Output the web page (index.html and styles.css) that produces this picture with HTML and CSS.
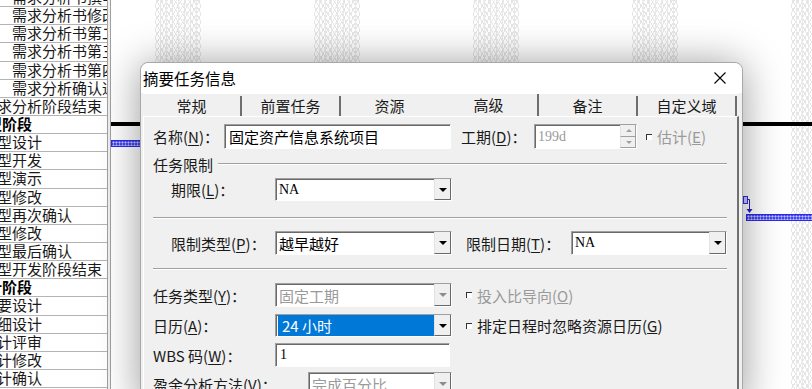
FILE: index.html
```html
<!DOCTYPE html>
<html lang="zh-CN">
<head>
    <meta charset="UTF-8">
    <meta name="viewport" content="width=device-width, initial-scale=1.0">
    <title>摘要任务信息</title>
    <link rel="stylesheet" href="styles.css">
</head>
<body>
    <!-- 背景：任务列表 + 甘特图 -->
    <div class="project">
        <div class="task-list">
            <div class="task lvl2">需求分析书撰写</div>
            <div class="task lvl2">需求分析书修改</div>
            <div class="task lvl2">需求分析书第二次修改</div>
            <div class="task lvl2">需求分析书第三次修改</div>
            <div class="task lvl2">需求分析书第四次修改</div>
            <div class="task lvl2">需求分析确认通过</div>
            <div class="task lvl1">需求分析阶段结束</div>
            <div class="task lvl0">原型阶段</div>
            <div class="task lvl1">原型设计</div>
            <div class="task lvl1">原型开发</div>
            <div class="task lvl1">原型演示</div>
            <div class="task lvl1">原型修改</div>
            <div class="task lvl1">原型再次确认</div>
            <div class="task lvl1">原型修改</div>
            <div class="task lvl1">原型最后确认</div>
            <div class="task lvl1">原型开发阶段结束</div>
            <div class="task lvl0">设计阶段</div>
            <div class="task lvl1">概要设计</div>
            <div class="task lvl1">详细设计</div>
            <div class="task lvl1">设计评审</div>
            <div class="task lvl1">设计修改</div>
            <div class="task lvl1">设计确认</div>
        </div>
        <div class="splitter"></div>
        <div class="gantt">
            <div class="timescale">
                <div class="days first"></div>
                <div class="weekend"></div><div class="days"></div>
                <div class="weekend"></div><div class="days"></div>
                <div class="weekend"></div><div class="days"></div>
                <div class="weekend"></div><div class="days"></div>
                <div class="weekend"></div><div class="days"></div>
            </div>
            <div class="bar summary-bar"></div>
            <div class="bar task-bar bar-a"></div>
            <div class="bar task-bar bar-b"></div>
            <svg class="link" width="14" height="22" viewBox="0 0 14 22">
                <rect x="2.5" y="2.5" width="4" height="7" fill="#c8c8ff" stroke="#3030e0" stroke-width="1"/>
                <path d="M6.5 5.5 H8.5 V17" fill="none" stroke="#2020d0" stroke-width="1"/>
                <path d="M5.5 15 L11.5 15 L8.5 19 Z" fill="#2020d0"/>
            </svg>
        </div>
    </div>

    <!-- 对话框 -->
    <div class="dialog">
        <div class="dialog-title">
            <span>摘要任务信息</span>
            <svg class="close" width="14" height="14" viewBox="0 0 14 14">
                <path d="M1.5 1.5 L12.5 12.5 M12.5 1.5 L1.5 12.5" stroke="#000" stroke-width="1.1"/>
            </svg>
        </div>

        <div class="tabs">
            <div class="tab">常规</div>
            <div class="tab">前置任务</div>
            <div class="tab before-active">资源</div>
            <div class="tab active">高级</div>
            <div class="tab">备注</div>
            <div class="tab">自定义域</div>
        </div>

        <div class="tab-page">
            <div class="row row-name">
                <span class="lbl lbl-name">名称(<u>N</u>)：</span>
                <div class="field edit name-input">固定资产信息系统项目</div>
                <span class="lbl lbl-duration">工期(<u>D</u>)：</span>
                <div class="field spin">
                    <span class="val serif muted">199d</span>
                    <span class="spin-btns"><span class="up"></span><span class="down"></span></span>
                </div>
                <span class="check muted"><i></i>估计(<u>E</u>)</span>
            </div>

            <div class="group-title"><span>任务限制</span><div class="line"></div></div>

            <div class="row row-deadline indent">
                <span class="lbl lbl-indent">期限(<u>L</u>)：</span>
                <div class="field combo"><span class="val serif">NA</span><span class="drop"></span></div>
            </div>

            <div class="sep sep-1"></div>

            <div class="row row-constraint indent">
                <span class="lbl lbl-indent">限制类型(<u>P</u>)：</span>
                <div class="field combo"><span class="val">越早越好</span><span class="drop"></span></div>
                <span class="lbl lbl-date">限制日期(<u>T</u>)：</span>
                <div class="field combo combo-date"><span class="val serif">NA</span><span class="drop"></span></div>
            </div>

            <div class="sep sep-2"></div>

            <div class="row row-type">
                <span class="lbl lbl-wide">任务类型(<u>Y</u>)：</span>
                <div class="field combo"><span class="val muted">固定工期</span><span class="drop muted-drop"></span></div>
                <span class="check muted"><i></i>投入比导向(<u>O</u>)</span>
            </div>

            <div class="row row-calendar">
                <span class="lbl lbl-wide">日历(<u>A</u>)：</span>
                <div class="field combo"><span class="val selected">24 小时</span><span class="drop"></span></div>
                <span class="check"><i></i>排定日程时忽略资源日历(<u>G</u>)</span>
            </div>

            <div class="row row-wbs">
                <span class="lbl lbl-wide">WBS 码(<u>W</u>)：</span>
                <div class="field edit wbs-input"><span class="serif">1</span></div>
            </div>

            <div class="row row-earned">
                <span class="lbl lbl-earned">盈余分析方法(<u>V</u>)：</span>
                <div class="field combo combo-earned"><span class="val muted">完成百分比</span><span class="drop muted-drop"></span></div>
            </div>
        </div>
    </div>
</body>
</html>
```

FILE: styles.css
```css
html, body {
    margin: 0;
    padding: 0;
    height: 389px;
    overflow: hidden;
    background: #fff;
    font-family: "Noto Sans CJK SC", sans-serif;
    color: #000;
}

/* 背景视图 */
.project {
    display: flex;
    height: 389px;
    overflow: hidden;
}

.task-list {
    width: 107px;
    flex-shrink: 0;
    border-right: 1px solid #a0a0a0;
    overflow: hidden;
}

.task {
    height: 18.15px;
    box-sizing: border-box;
    border-bottom: 1px solid #b4b4b4;
    font-size: 15px;
    line-height: 16px;
    white-space: nowrap;
    overflow: hidden;
    color: #1a1a1a;
}

.task:first-child {
    margin-top: -11px;
}

.lvl0 {
    text-indent: -28px;
    font-weight: bold;
    color: #000;
}

.lvl1 {
    text-indent: -18px;
}

.lvl2 {
    text-indent: 12px;
}

.splitter {
    width: 2px;
    flex-shrink: 0;
    background: #f0f0f0;
    border-right: 1px solid #a0a0a0;
}

.gantt {
    position: relative;
    flex: 1;
    overflow: hidden;
}

.timescale {
    display: flex;
    height: 100%;
}

.days {
    width: 113px;
    flex-shrink: 0;
}

.days.first {
    width: 44px;
}

/* 非工作日阴影 */
.weekend {
    width: 46px;
    flex-shrink: 0;
    background-color: #fff;
    background-image:
        repeating-linear-gradient(90deg, transparent 0 5px, #e8e8e8 5px 6px),
        repeating-linear-gradient(60deg, transparent 0 3px, #e6e6e6 3px 4px),
        repeating-linear-gradient(-60deg, transparent 0 3px, #e6e6e6 3px 4px);
}

.bar {
    position: absolute;
}

.summary-bar {
    top: 122px;
    left: 0;
    right: 0;
    height: 4px;
    background: #000;
}

.task-bar {
    height: 5px;
    border: 1px solid #2a2ae8;
    background-color: #4646f0;
    background-image: radial-gradient(#c8c8ff 0.9px, transparent 1.1px);
    background-size: 3px 3px;
}

.bar-a {
    top: 140px;
    left: 0;
    width: 80px;
}

.bar-b {
    top: 214px;
    left: 635px;
    width: 100px;
}

.link {
    position: absolute;
    left: 630px;
    top: 194px;
}

/* 对话框 */
.dialog {
    position: absolute;
    left: 140px;
    top: 62px;
    width: 603px;
    height: 345px;
    box-sizing: border-box;
    border: 1px solid #a8a8a8;
    border-radius: 8px 8px 0 0;
    background: #f0f0f0;
    box-shadow: 0 2px 40px rgba(0, 0, 0, 0.4);
    padding: 0 3px 0 2px;
    font-size: 15px;
}

.dialog-title {
    display: flex;
    align-items: center;
    justify-content: space-between;
    height: 30px;
    margin: 0 -3px 0 -2px;
    padding: 0 15px 0 2px;
    background: #fff;
    border-radius: 8px 8px 0 0;
    font-size: 15.5px;
}

.close {
    display: block;
}

.tabs {
    display: grid;
    grid-template-columns: repeat(6, 99px);
    height: 22px;
    border-top: 1px solid #fff;
}

.tab {
    display: flex;
    align-items: center;
    justify-content: center;
    box-sizing: border-box;
    border-right: 2px solid #6e6e6e;
    height: 20px;
    margin-top: 2px;
    line-height: 20px;
    color: #1a1a1a;
}

.tab.before-active {
    border-right-color: transparent;
}

.tab.active {
    margin-top: 0;
    height: 22px;
}

.tab-page {
    display: flex;
    flex-direction: column;
    height: 300px;
    box-sizing: border-box;
    border-left: 1px solid #fff;
    border-top: 1px solid #fff;
    border-right: 2px solid #707070;
    padding: 7px 10px 0 9px;
}

.row {
    display: flex;
    align-items: center;
}

.lbl {
    flex-shrink: 0;
    white-space: nowrap;
    color: #1a1a1a;
}

.lbl u {
    text-underline-offset: 2px;
}

.lbl-name {
    width: 71px;
}

.lbl-duration {
    width: 73px;
    margin-left: 10px;
}

.lbl-indent {
    width: 104px;
    margin-left: 18px;
}

.lbl-date {
    width: 105px;
    margin-left: 14px;
}

.lbl-wide {
    width: 122px;
}

.lbl-earned {
    width: 155px;
}

/* 输入框与下拉框 */
.field {
    display: flex;
    align-items: center;
    box-sizing: border-box;
    background: #fff;
    border-top: 1px solid #a0a0a0;
    border-left: 1px solid #a0a0a0;
    border-right: 1px solid #fff;
    border-bottom: 1px solid #fff;
    box-shadow: inset 1px 1px 0 #696969;
    white-space: nowrap;
}

.edit {
    padding-left: 4px;
}

.name-input {
    width: 227px;
    height: 25px;
}

.wbs-input {
    width: 175px;
    height: 24px;
}

.spin {
    width: 103px;
    height: 25px;
    padding-left: 3px;
}

.spin .val {
    flex: 1;
}

.spin-btns {
    display: flex;
    flex-direction: column;
    width: 16px;
    height: 23px;
    align-self: flex-start;
}

.spin-btns span {
    position: relative;
    flex: 1;
    background: #f0f0f0;
    border-left: 1px solid #e3e3e3;
    border-right: 1px solid #a0a0a0;
    border-bottom: 1px solid #a0a0a0;
}

.spin-btns .up::after,
.spin-btns .down::after {
    content: "";
    position: absolute;
    left: 5px;
    top: 4px;
    border-left: 3px solid transparent;
    border-right: 3px solid transparent;
}

.spin-btns .up::after {
    border-bottom: 3px solid #a0a0a0;
}

.spin-btns .down::after {
    border-top: 3px solid #a0a0a0;
}

.combo {
    width: 177px;
    height: 24px;
    padding: 0 0 0 2px;
}

.combo-date {
    width: 156px;
}

.combo-earned {
    width: 144px;
}

.combo .val {
    flex: 1;
    height: 100%;
    display: flex;
    align-items: center;
    padding-left: 1px;
}

.val.selected {
    background: #0078d7;
    color: #fff;
    padding-left: 4px;
}

.drop {
    position: relative;
    align-self: stretch;
    width: 15px;
    flex-shrink: 0;
    background: #f0f0f0;
    border-left: 1px solid #e3e3e3;
    border-right: 1px solid #696969;
    border-bottom: 1px solid #696969;
}

.drop::after {
    content: "";
    position: absolute;
    left: 4px;
    top: 9px;
    border-left: 4px solid transparent;
    border-right: 4px solid transparent;
    border-top: 4px solid #000;
}

.muted-drop::after {
    border-top-color: #8c8c8c;
}

.serif {
    font-family: "Liberation Serif", serif;
    font-size: 14px;
}

.muted {
    color: #9a9a9a;
}

/* 复选框 */
.check {
    display: flex;
    align-items: center;
    white-space: nowrap;
    margin-left: 14px;
    color: #1a1a1a;
}

.check.muted {
    color: #9a9a9a;
}

.row-name .check {
    margin-left: 9px;
}

.check i {
    width: 5px;
    height: 5px;
    margin-right: 5px;
    background: #fff;
    border-top: 1.5px solid #333;
    border-left: 1.5px solid #333;
}

/* 分组标题与分隔线 */
.group-title {
    display: flex;
    align-items: center;
    height: 16px;
    margin-top: 7px;
    color: #1a1a1a;
}

.group-title .line {
    flex: 1;
    margin-left: 5px;
    border-top: 1px solid #a0a0a0;
    border-bottom: 1px solid #fff;
}

.sep {
    border-top: 1px solid #a0a0a0;
    border-bottom: 1px solid #fff;
}

.row-name { height: 25px; }
.row-deadline { margin-top: 6px; height: 23px; }
.row-deadline .combo { height: 23px; }
.sep-1 { margin-top: 16px; }
.row-constraint { margin-top: 12px; height: 24px; }
.sep-2 { margin-top: 13px; }
.row-type { margin-top: 13px; height: 24px; }
.row-calendar { margin-top: 7px; height: 23px; }
.row-calendar .combo { height: 23px; }
.row-wbs { margin-top: 6px; height: 24px; }
.row-earned { margin-top: 5px; height: 24px; }
```
